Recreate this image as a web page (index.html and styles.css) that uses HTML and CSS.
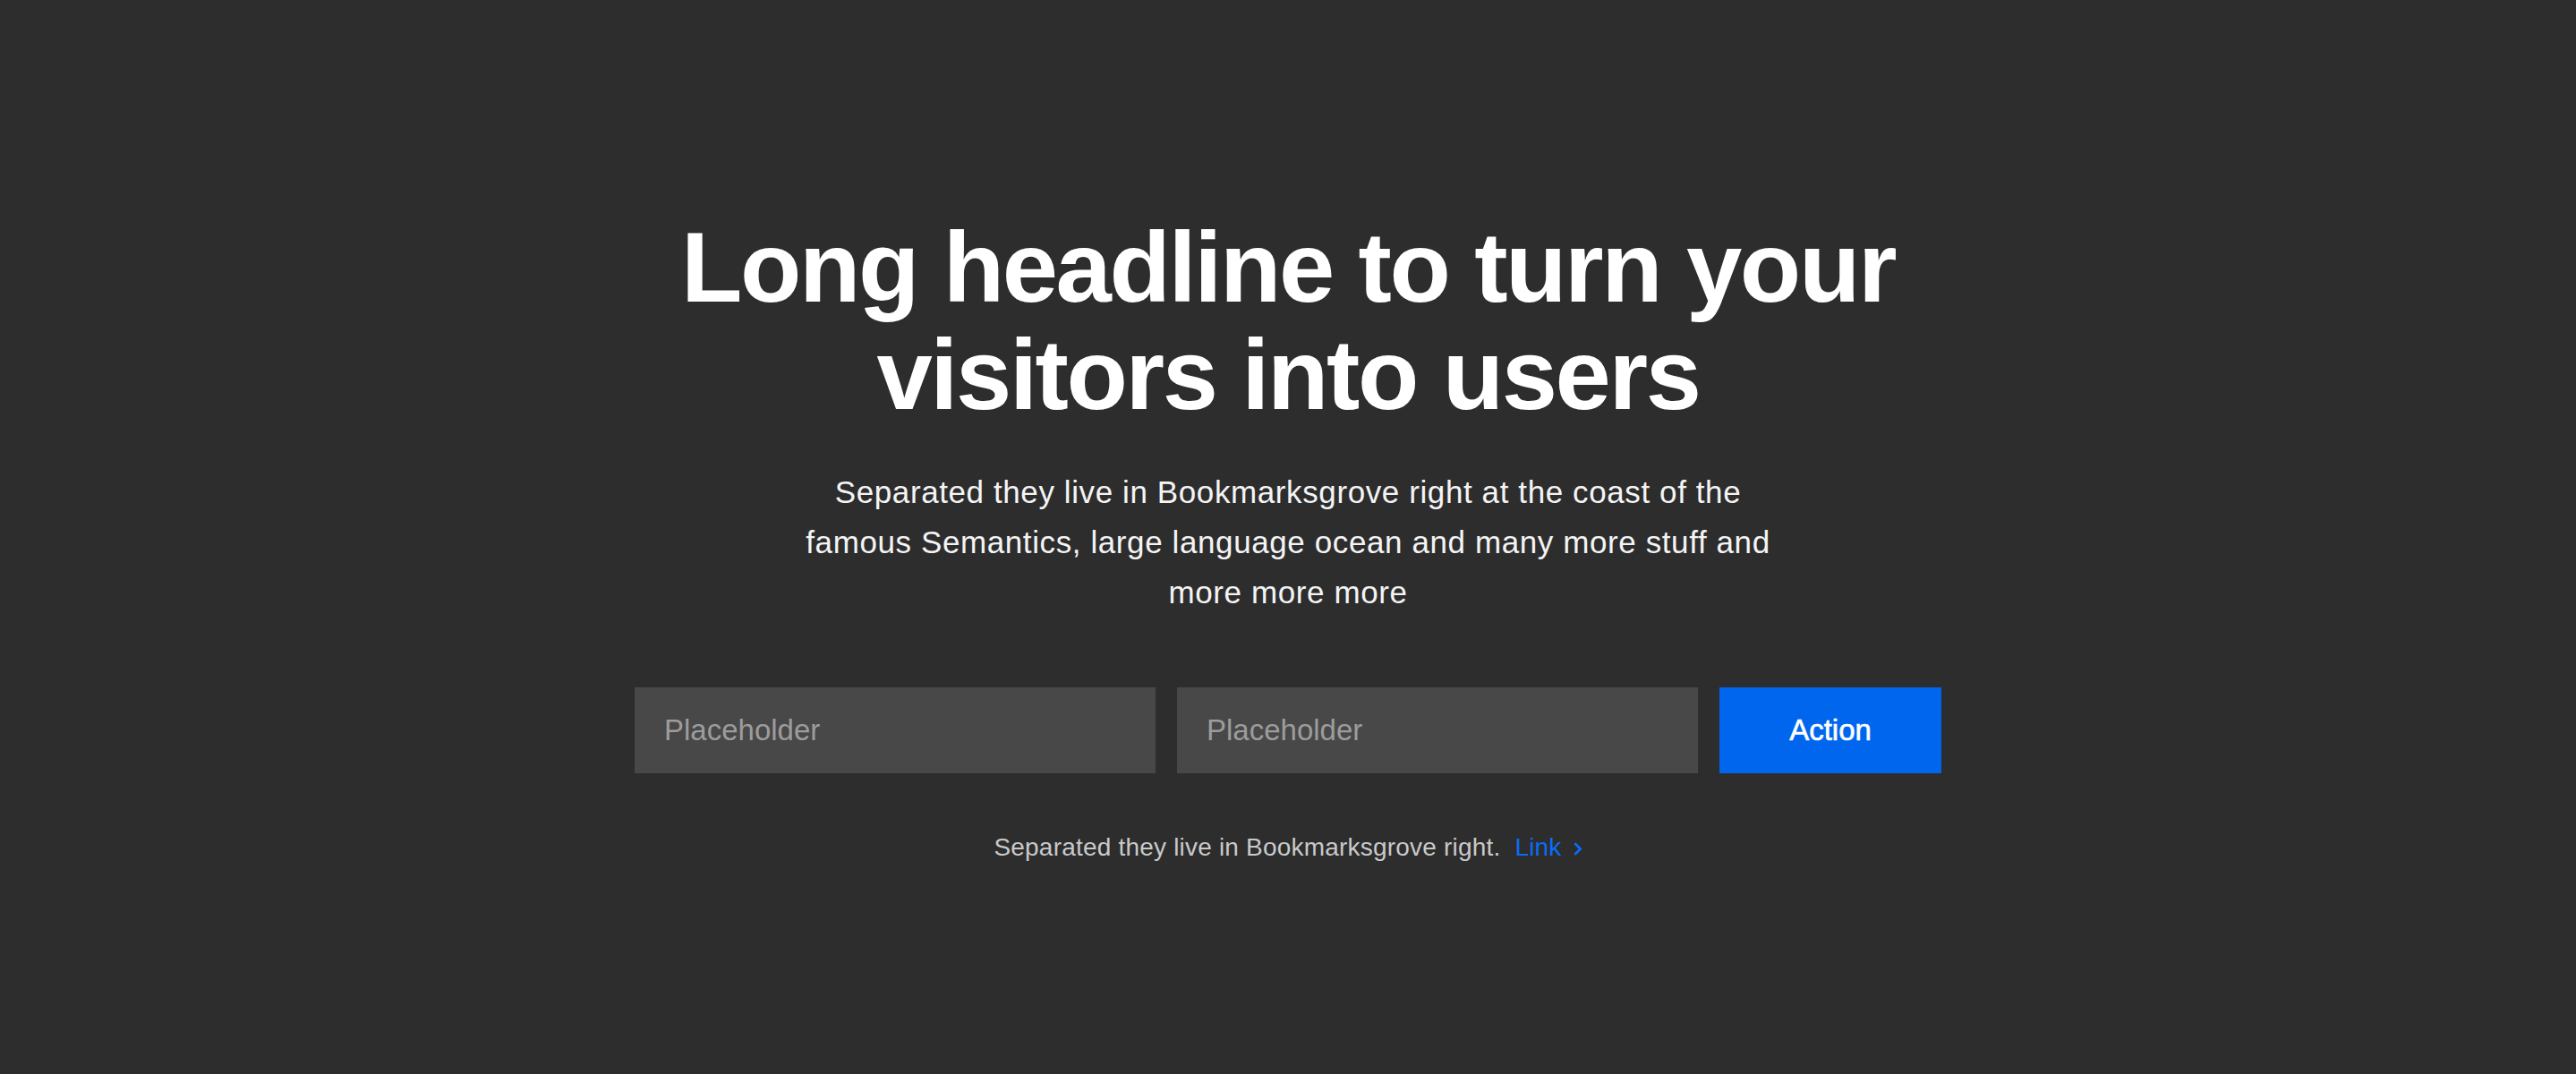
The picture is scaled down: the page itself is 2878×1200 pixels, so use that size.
FILE: index.html
```html
<!DOCTYPE html>
<html lang="en">
<head>
<meta charset="utf-8">
<title>Hero</title>
<link rel="stylesheet" href="styles.css">
</head>
<body>
<main class="hero">
  <h1 class="title">Long headline to turn your<br>visitors into users</h1>
  <p class="lead">Separated they live in Bookmarksgrove right at the coast of the famous Semantics, large language ocean and many more stuff and more more more</p>
  <form class="form">
    <input class="field" type="text" placeholder="Placeholder">
    <input class="field" type="text" placeholder="Placeholder">
    <button class="action" type="button">Action</button>
  </form>
  <p class="note">Separated they live in Bookmarksgrove right. <a class="link" href="#">Link<svg class="chev" viewBox="0 0 10 16" width="11" height="17"><path d="M2 2 L8 8 L2 14" fill="none" stroke="currentColor" stroke-width="2.6"/></svg></a></p>
</main>
</body>
</html>
```
FILE: styles.css
```css
* { box-sizing: border-box; }
html, body { margin: 0; padding: 0; }
body {
  background: #2d2d2d;
  font-family: "Liberation Sans", Arial, sans-serif;
  color: #ffffff;
}
.hero {
  min-height: 1200px;
  padding-top: 239px;
  display: flex;
  flex-direction: column;
  align-items: center;
  text-align: center;
}
.title {
  margin: 0;
  font-size: 112px;
  line-height: 120px;
  font-weight: 700;
  letter-spacing: -2.4px;
}
.lead {
  margin: 43px 0 0;
  max-width: 1090px;
  font-size: 35px;
  line-height: 56px;
  letter-spacing: 0.6px;
  color: #f4f4f4;
}
.form {
  margin-top: 78px;
  width: 1460px;
  display: grid;
  grid-template-columns: 1fr 1fr 248px;
  gap: 24px;
}
.field {
  height: 96px;
  border: 0;
  outline: 0;
  background: #484848;
  padding: 0 33px;
  font-family: inherit;
  font-size: 33px;
  color: #fff;
}
.field::placeholder { color: #9c9c9c; }
.action {
  height: 96px;
  border: 0;
  background: #0066ee;
  color: #fff;
  font-family: inherit;
  font-size: 33px;
  -webkit-text-stroke: 0.6px #fff;
}
.note {
  margin: 65px 0 0;
  font-size: 28px;
  line-height: 36px;
  letter-spacing: 0.2px;
  color: #c9c9c9;
}
.link {
  margin-left: 8px;
  color: #0a6cf7;
  text-decoration: none;
}
.chev {
  margin-left: 12px;
  vertical-align: -1px;
}
```
